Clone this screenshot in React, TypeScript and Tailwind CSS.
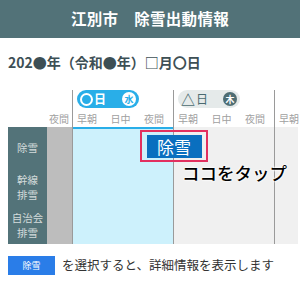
const font = { fontFamily: '"Noto Sans CJK JP", "Noto Sans", sans-serif' };

const SubLabels = ({ labels }: { labels: string[] }) => (
  <div className="flex pt-[4px] text-[10px] leading-[14px] text-[#a0a0a0]">
    {labels.map((l, i) => (
      <span key={i} className="w-[33.5px] pl-[5px]">
        {l}
      </span>
    ))}
  </div>
);

export default function App() {
  return (
    <div className="w-[300px] h-[286px] overflow-hidden bg-white" style={font}>
      <div className="flex h-[38px] items-center justify-center bg-[#527278] text-[15.5px] font-bold tracking-[0.3px] text-white">
        江別市　除雪出動情報
      </div>

      <div className="flex h-[52px] items-center px-2 pb-1 text-[14px] font-bold text-[#3d4f55]">
        202●年（令和●年）□月〇日
      </div>

      <div className="relative ml-2 flex w-[290px]">
        {/* row labels */}
        <div className="w-[39px]">
          <div className="h-[37px]" />
          <div className="flex h-[117px] flex-col bg-[#537379] text-center text-[10.5px] leading-[15px] text-[#d3dcdc]">
            <div className="flex h-[40px] items-center justify-center">除雪</div>
            <div className="flex h-[39px] flex-col items-center justify-center">
              <span>幹線</span>
              <span>排雪</span>
            </div>
            <div className="flex h-[38px] flex-col items-center justify-center">
              <span>自治会</span>
              <span>排雪</span>
            </div>
          </div>
        </div>

        {/* previous night */}
        <div className="w-[25px]">
          <div className="flex h-[37px] items-end justify-end pb-[1px] pr-[3px] text-[10px] leading-[14px] text-[#a0a0a0]">
            夜間
          </div>
          <div className="h-[117px] bg-[#bdbdbd]" />
        </div>

        {/* day 1 */}
        <div className="w-[101px] border-l border-[#9a9a9a]">
          <div className="h-[37px] pl-[4px]">
            <div className="flex h-[18px] w-[62px] items-center rounded-full bg-[#29aee8] px-[3px]">
              <span className="h-[13px] w-[13px] rounded-full border-2 border-white" />
              <span className="ml-[1px] text-[12px] font-bold leading-none text-white">日</span>
              <span className="ml-auto flex h-[14px] w-[14px] items-center justify-center rounded-full bg-white text-[9px] font-bold leading-none text-[#29aee8]">
                水
              </span>
            </div>
          </div>
          <div className="h-[117px] border-t-2 border-[#29aee8] bg-[#cdf1fc]" />
        </div>

        {/* day 2 */}
        <div className="w-[101px] border-l border-[#9a9a9a]">
          <div className="h-[37px] pl-[4px]">
            <div className="flex h-[18px] w-[62px] items-center rounded-full bg-[#e5eaea] px-[3px]">
              <span className="text-[14px] font-bold leading-none text-[#4a6a70]">△</span>
              <span className="ml-[1px] text-[12px] leading-none text-[#4a6a70]">日</span>
              <span className="ml-auto flex h-[14px] w-[14px] items-center justify-center rounded-full bg-[#4e6d73] text-[9px] font-bold leading-none text-white">
                木
              </span>
            </div>
          </div>
          <div className="h-[117px] bg-[#f0f0f0]" />
        </div>

        {/* day 3 */}
        <div className="flex-1 border-l border-[#9a9a9a]">
          <div className="h-[37px]" />
          <div className="h-[117px] bg-[#f0f0f0]" />
        </div>

        {/* sub labels drawn over header row */}
        <div className="absolute left-[64px] top-[18px] flex">
          <div className="w-[101px]">
            <SubLabels labels={["早朝", "日中", "夜間"]} />
          </div>
          <div className="w-[101px]">
            <SubLabels labels={["早朝", "日中", "夜間"]} />
          </div>
          <SubLabels labels={["早朝"]} />
        </div>

        {/* tap target */}
        <div className="absolute left-[132px] top-[40px] flex h-[32px] w-[68px] items-center justify-center border-2 border-[#e2305f]">
          <div className="flex h-[23px] w-[55px] items-center justify-center bg-[#0a6fbf] text-[17px] leading-none text-white">
            除雪
          </div>
        </div>

        <div
          className="absolute left-[174px] top-[73px] text-[17.5px] font-medium leading-[20px] text-black"
          style={{ textShadow: "0 0 2px #fff, 0 0 2px #fff, 0 0 3px #fff" }}
        >
          ココをタップ
        </div>
      </div>

      <div className="ml-2 mt-[12px] flex items-center">
        <div className="flex h-[19px] w-[47px] items-center justify-center bg-[#2a7de8] text-[9px] text-white">
          除雪
        </div>
        <span className="ml-[7px] text-[12.5px] text-[#333]">を選択すると、詳細情報を表示します</span>
      </div>
    </div>
  );
}
